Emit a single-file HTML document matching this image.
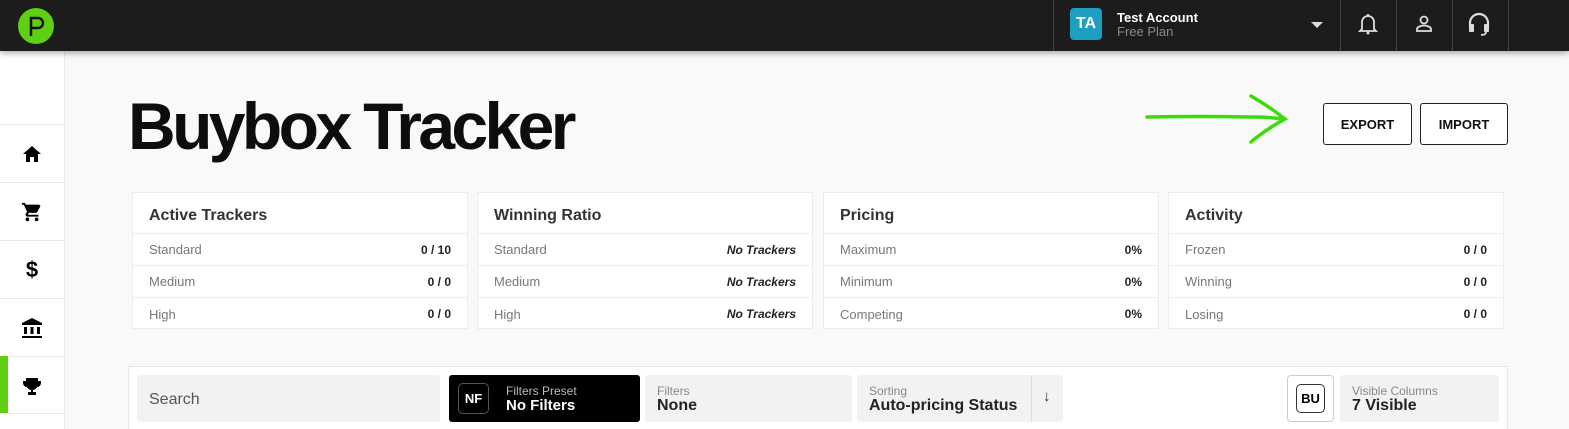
<!DOCTYPE html>
<html><head><style>
*{box-sizing:border-box;margin:0;padding:0}
html,body{width:1569px;height:429px;overflow:hidden}
body{background:#f9f9f9;font-family:"Liberation Sans",Arial,sans-serif;position:relative}
.top{position:absolute;left:0;top:0;width:1569px;height:51px;background:#1c1c1c;box-shadow:0 2px 6px rgba(0,0,0,.35);z-index:2}
.side{position:absolute;left:0;top:51px;width:65px;height:378px;background:#fff;border-right:1px solid #e6e6e6}
.si{position:absolute;left:0;width:64px;height:58px;border-top:1px solid #e8e8e8;display:flex;align-items:center;justify-content:center}
.abs{position:absolute}
.card{position:absolute;top:192px;width:336px;height:137px;background:#fff;border:1px solid #ececec}
.card h3{height:41px;line-height:46px;padding-left:16px;font-size:16px;color:#333;border-bottom:1px solid #eee}
.row{height:32px;border-bottom:1px solid #eee;display:flex;justify-content:space-between;align-items:center;padding:0 16px;font-size:13px;color:#777}
.row:last-child{border-bottom:none}
.row b{color:#222;font-size:12px}
.row i{color:#222;font-size:12px;font-weight:bold}
.box{position:absolute;top:375px;height:47px;background:#f2f2f2;border-radius:3px}
.lbl{position:absolute;left:12px;top:9px;font-size:12px;color:#888}
.val{position:absolute;left:12px;top:22px;font-size:16px;font-weight:bold;color:#222}
.btn{position:absolute;top:103px;height:42px;border:1px solid #222;border-radius:3px;background:#fff;font-size:13px;font-weight:bold;color:#111;display:flex;align-items:center;justify-content:center}
.vl{position:absolute;top:0;width:1px;height:51px;background:#444}
</style></head><body>
<div class="top">
  <svg class="abs" style="left:18px;top:8px" width="36" height="36" viewBox="0 0 36 36"><circle cx="18" cy="18" r="18" fill="#5fcf12"/><path d="M13 28V10h7a5 5 0 0 1 0 10h-7" fill="none" stroke="#111" stroke-width="2.5"/></svg>
  <div class="vl" style="left:1053px"></div>
  <div class="abs" style="left:1070px;top:8px;width:32px;height:32px;background:#1e9fbf;border-radius:4px;color:#fff;font-weight:bold;font-size:16px;line-height:32px;text-align:center">TA</div>
  <div class="abs" style="left:1117px;top:10px;color:#fff;font-weight:bold;font-size:13px">Test Account</div>
  <div class="abs" style="left:1117px;top:24px;color:#8a8a8a;font-size:13px">Free Plan</div>
  <div class="abs" style="left:1311px;top:22px;width:0;height:0;border-left:6px solid transparent;border-right:6px solid transparent;border-top:6px solid #ddd"></div>
  <div class="vl" style="left:1340px"></div><div class="vl" style="left:1396px"></div><div class="vl" style="left:1452px"></div><div class="vl" style="left:1508px"></div>
  <svg class="abs" style="left:1358px;top:13px" width="20" height="22" viewBox="0 0 20 22"><path d="M4 16V9a6 6 0 0 1 12 0v7l2 2H2z" fill="none" stroke="#ddd" stroke-width="1.8"/><circle cx="10" cy="20" r="1.5" fill="#ddd"/><rect x="9" y="1" width="2" height="2" fill="#ddd"/></svg>
  <svg class="abs" style="left:1414px;top:14px" width="20" height="20" viewBox="0 0 20 20"><circle cx="10" cy="6" r="3.5" fill="none" stroke="#ddd" stroke-width="1.8"/><path d="M3 17v-2c0-2 4-3.5 7-3.5s7 1.5 7 3.5v2z" fill="none" stroke="#ddd" stroke-width="1.8"/></svg>
  <svg class="abs" style="left:1467px;top:11px" width="24" height="26" viewBox="0 0 24 26"><path d="M3 16v-4a9 9 0 0 1 18 0v4" fill="none" stroke="#ddd" stroke-width="2.2"/><rect x="2" y="13" width="5" height="8" rx="1" fill="#ddd"/><rect x="17" y="13" width="5" height="8" rx="1" fill="#ddd"/><path d="M19 21q0 3-5 3" fill="none" stroke="#ddd" stroke-width="1.8"/></svg>
</div>
<div class="side">
  <div class="si" style="top:73px"><svg width="20" height="18" viewBox="0 0 20 18"><path d="M10 1L1 9h3v8h4v-5h4v5h4V9h3z" fill="#000"/></svg></div>
  <div class="si" style="top:131px"><svg width="22" height="22" viewBox="0 0 24 24"><path d="M7 18a2 2 0 1 0 0 4 2 2 0 0 0 0-4zM1 2v2h2l3.6 7.6-1.4 2.4c-.1.3-.2.6-.2 1 0 1.1.9 2 2 2h12v-2H7.4l1.1-2h7.5c.8 0 1.4-.4 1.7-1l3.6-6.5L19.6 4H5.2l-.9-2zm16 16a2 2 0 1 0 0 4 2 2 0 0 0 0-4z" fill="#000"/></svg></div>
  <div class="si" style="top:189px;font-size:22px;font-weight:bold">$</div>
  <div class="si" style="top:247px"><svg width="22" height="22" viewBox="0 0 22 22"><path d="M11 1L1 6v2h20V6z M3 10h3v7H3z M9.5 10h3v7h-3z M16 10h3v7h-3z M1 19h20v2H1z" fill="#000"/></svg></div>
  <div class="si" style="top:305px"><svg width="20" height="20" viewBox="0 0 20 20"><path d="M4 2h12v3h3v2a4 4 0 0 1-4 4 5 5 0 0 1-4 3v2h3v3H6v-3h3v-2a5 5 0 0 1-4-3 4 4 0 0 1-4-4V5h3z" fill="#000"/></svg></div>
  <div class="abs" style="left:0;top:305px;width:8px;height:57px;background:#5fcf12"></div>
  <div class="si" style="top:362px;height:20px"></div>
</div>
<div class="abs" style="left:128px;top:88px;font-size:66px;font-weight:bold;letter-spacing:-3.6px;color:#0d0d0d">Buybox Tracker</div>
<svg class="abs" style="left:1140px;top:92px" width="150" height="56" viewBox="0 0 150 56"><path d="M7 25 Q60 24 110 25 Q130 25 143 27 M111 4 Q130 15 145 27 Q125 38 111 50" fill="none" stroke="#3cdc0a" stroke-width="3.5" stroke-linecap="round"/></svg>
<div class="btn" style="left:1323px;width:89px">EXPORT</div>
<div class="btn" style="left:1420px;width:88px">IMPORT</div>

<div class="card" style="left:132px"><h3>Active Trackers</h3><div class="row">Standard<b>0 / 10</b></div><div class="row">Medium<b>0 / 0</b></div><div class="row">High<b>0 / 0</b></div></div>
<div class="card" style="left:477px"><h3>Winning Ratio</h3><div class="row">Standard<i>No Trackers</i></div><div class="row">Medium<i>No Trackers</i></div><div class="row">High<i>No Trackers</i></div></div>
<div class="card" style="left:823px"><h3>Pricing</h3><div class="row">Maximum<b>0%</b></div><div class="row">Minimum<b>0%</b></div><div class="row">Competing<b>0%</b></div></div>
<div class="card" style="left:1168px"><h3>Activity</h3><div class="row">Frozen<b>0 / 0</b></div><div class="row">Winning<b>0 / 0</b></div><div class="row">Losing<b>0 / 0</b></div></div>

<div class="abs" style="left:128px;top:366px;width:1380px;height:80px;background:#fff;border:1px solid #e6e6e6"></div>
<div class="box" style="left:137px;width:303px"><div class="abs" style="left:12px;top:16px;font-size:16px;color:#555">Search</div></div>
<div class="box" style="left:449px;width:191px;background:#000"><div class="abs" style="left:9px;top:8px;width:31px;height:31px;border:1px solid #555;border-radius:5px;color:#fff;font-weight:bold;font-size:13px;line-height:29px;text-align:center">NF</div><div class="abs" style="left:57px;top:9px;font-size:12px;color:#bbb">Filters Preset</div><div class="abs" style="left:57px;top:22px;font-size:15px;font-weight:bold;color:#fff">No Filters</div></div>
<div class="box" style="left:645px;width:207px"><div class="lbl">Filters</div><div class="val">None</div></div>
<div class="box" style="left:857px;width:206px"><div class="lbl">Sorting</div><div class="val">Auto-pricing Status</div><div class="abs" style="left:174px;top:0;width:1px;height:47px;background:#ddd"></div><div class="abs" style="left:186px;top:13px;font-size:15px;color:#333">↓</div></div>
<div class="abs" style="left:1287px;top:375px;width:47px;height:47px;border:1px solid #ccc;border-radius:4px;background:#fff"><div class="abs" style="left:8px;top:8px;width:29px;height:29px;border:1px solid #333;border-radius:5px;font-weight:bold;font-size:13px;line-height:27px;text-align:center">BU</div></div>
<div class="box" style="left:1340px;width:159px"><div class="lbl">Visible Columns</div><div class="val">7 Visible</div></div>
</body></html>
